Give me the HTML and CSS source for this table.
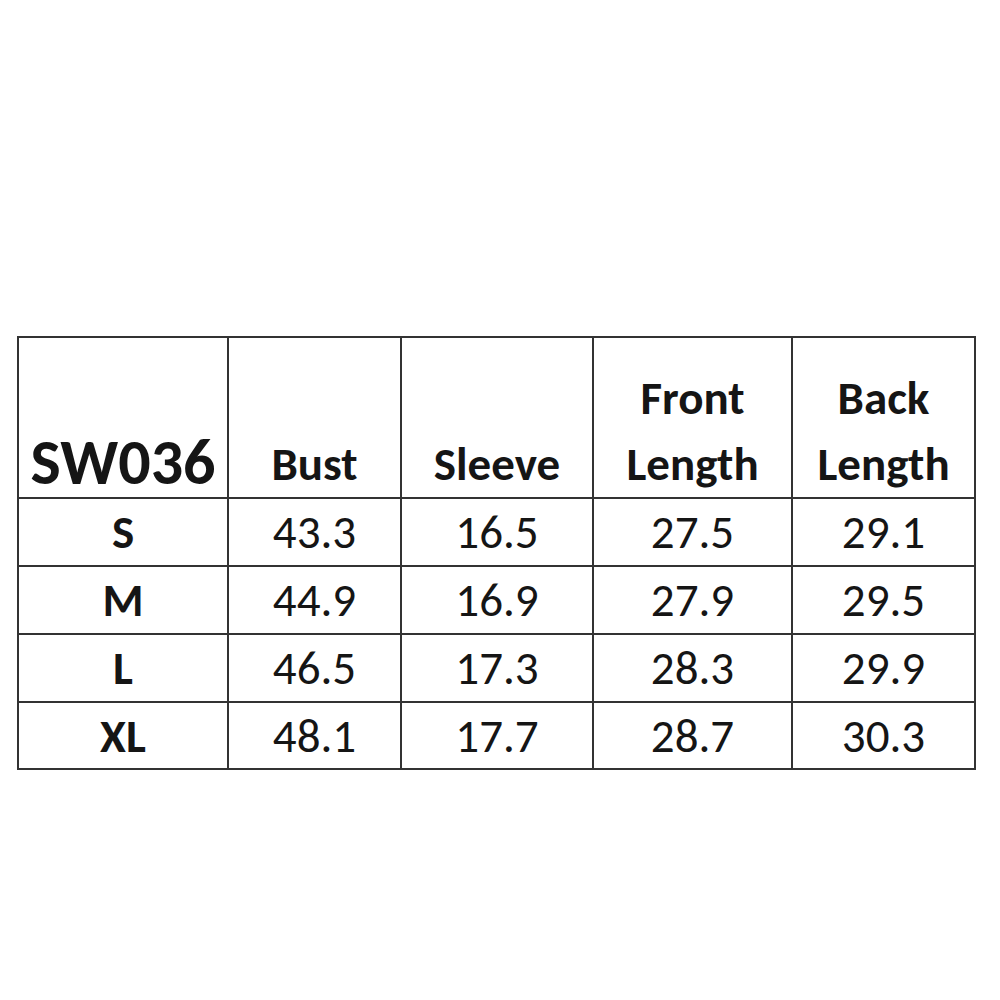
FILE: index.html
```html
<!DOCTYPE html>
<html>
<head>
<meta charset="utf-8">
<link rel="stylesheet" href="styles.css">
</head>
<body>
<main class="page">
  <table class="size-table">
    <thead>
      <tr class="head-row">
        <th class="c1 code">SW036</th>
        <th class="c2">Bust</th>
        <th class="c3">Sleeve</th>
        <th class="c4">Front<br>Length</th>
        <th class="c5">Back<br>Length</th>
      </tr>
    </thead>
    <tbody>
      <tr class="row"><th class="size">S</th><td>43.3</td><td>16.5</td><td>27.5</td><td>29.1</td></tr>
      <tr class="row"><th class="size">M</th><td>44.9</td><td>16.9</td><td>27.9</td><td>29.5</td></tr>
      <tr class="row"><th class="size">L</th><td>46.5</td><td>17.3</td><td>28.3</td><td>29.9</td></tr>
      <tr class="row last"><th class="size">XL</th><td>48.1</td><td>17.7</td><td>28.7</td><td>30.3</td></tr>
    </tbody>
  </table>
</main>
</body>
</html>
```

FILE: styles.css
```css
html, body {
  margin: 0;
  padding: 0;
  background: #ffffff;
}

.page {
  padding: 336px 0 0 17px;
}

.size-table {
  border-collapse: separate;
  border-spacing: 0;
  table-layout: fixed;
  width: 959px;
  border-top: 2px solid #333333;
  border-left: 2px solid #333333;
  font-family: Carlito, "Open Sans", sans-serif;
  color: #151515;
}

.size-table th,
.size-table td {
  box-sizing: border-box;
  border-right: 2px solid #333333;
  border-bottom: 2px solid #333333;
  padding: 0;
  text-align: center;
  vertical-align: middle;
}

.c1 { width: 210px; }
.c2 { width: 173px; }
.c3 { width: 192px; }
.c4 { width: 199px; }
.c5 { width: 183px; }

.head-row th {
  height: 161px;
  vertical-align: bottom;
  font-weight: 700;
  font-size: 47px;
  line-height: 66px;
  padding-bottom: 0;
}

.head-row .code {
  font-size: 64px;
  line-height: 66px;
  padding-bottom: 2px;
}

.row th,
.row td {
  height: 68px;
  font-size: 47px;
  line-height: 50px;
}

.row th {
  font-weight: 700;
}

.row td {
  font-weight: 400;
}

.row.last th,
.row.last td {
  height: 67px;
}
```
